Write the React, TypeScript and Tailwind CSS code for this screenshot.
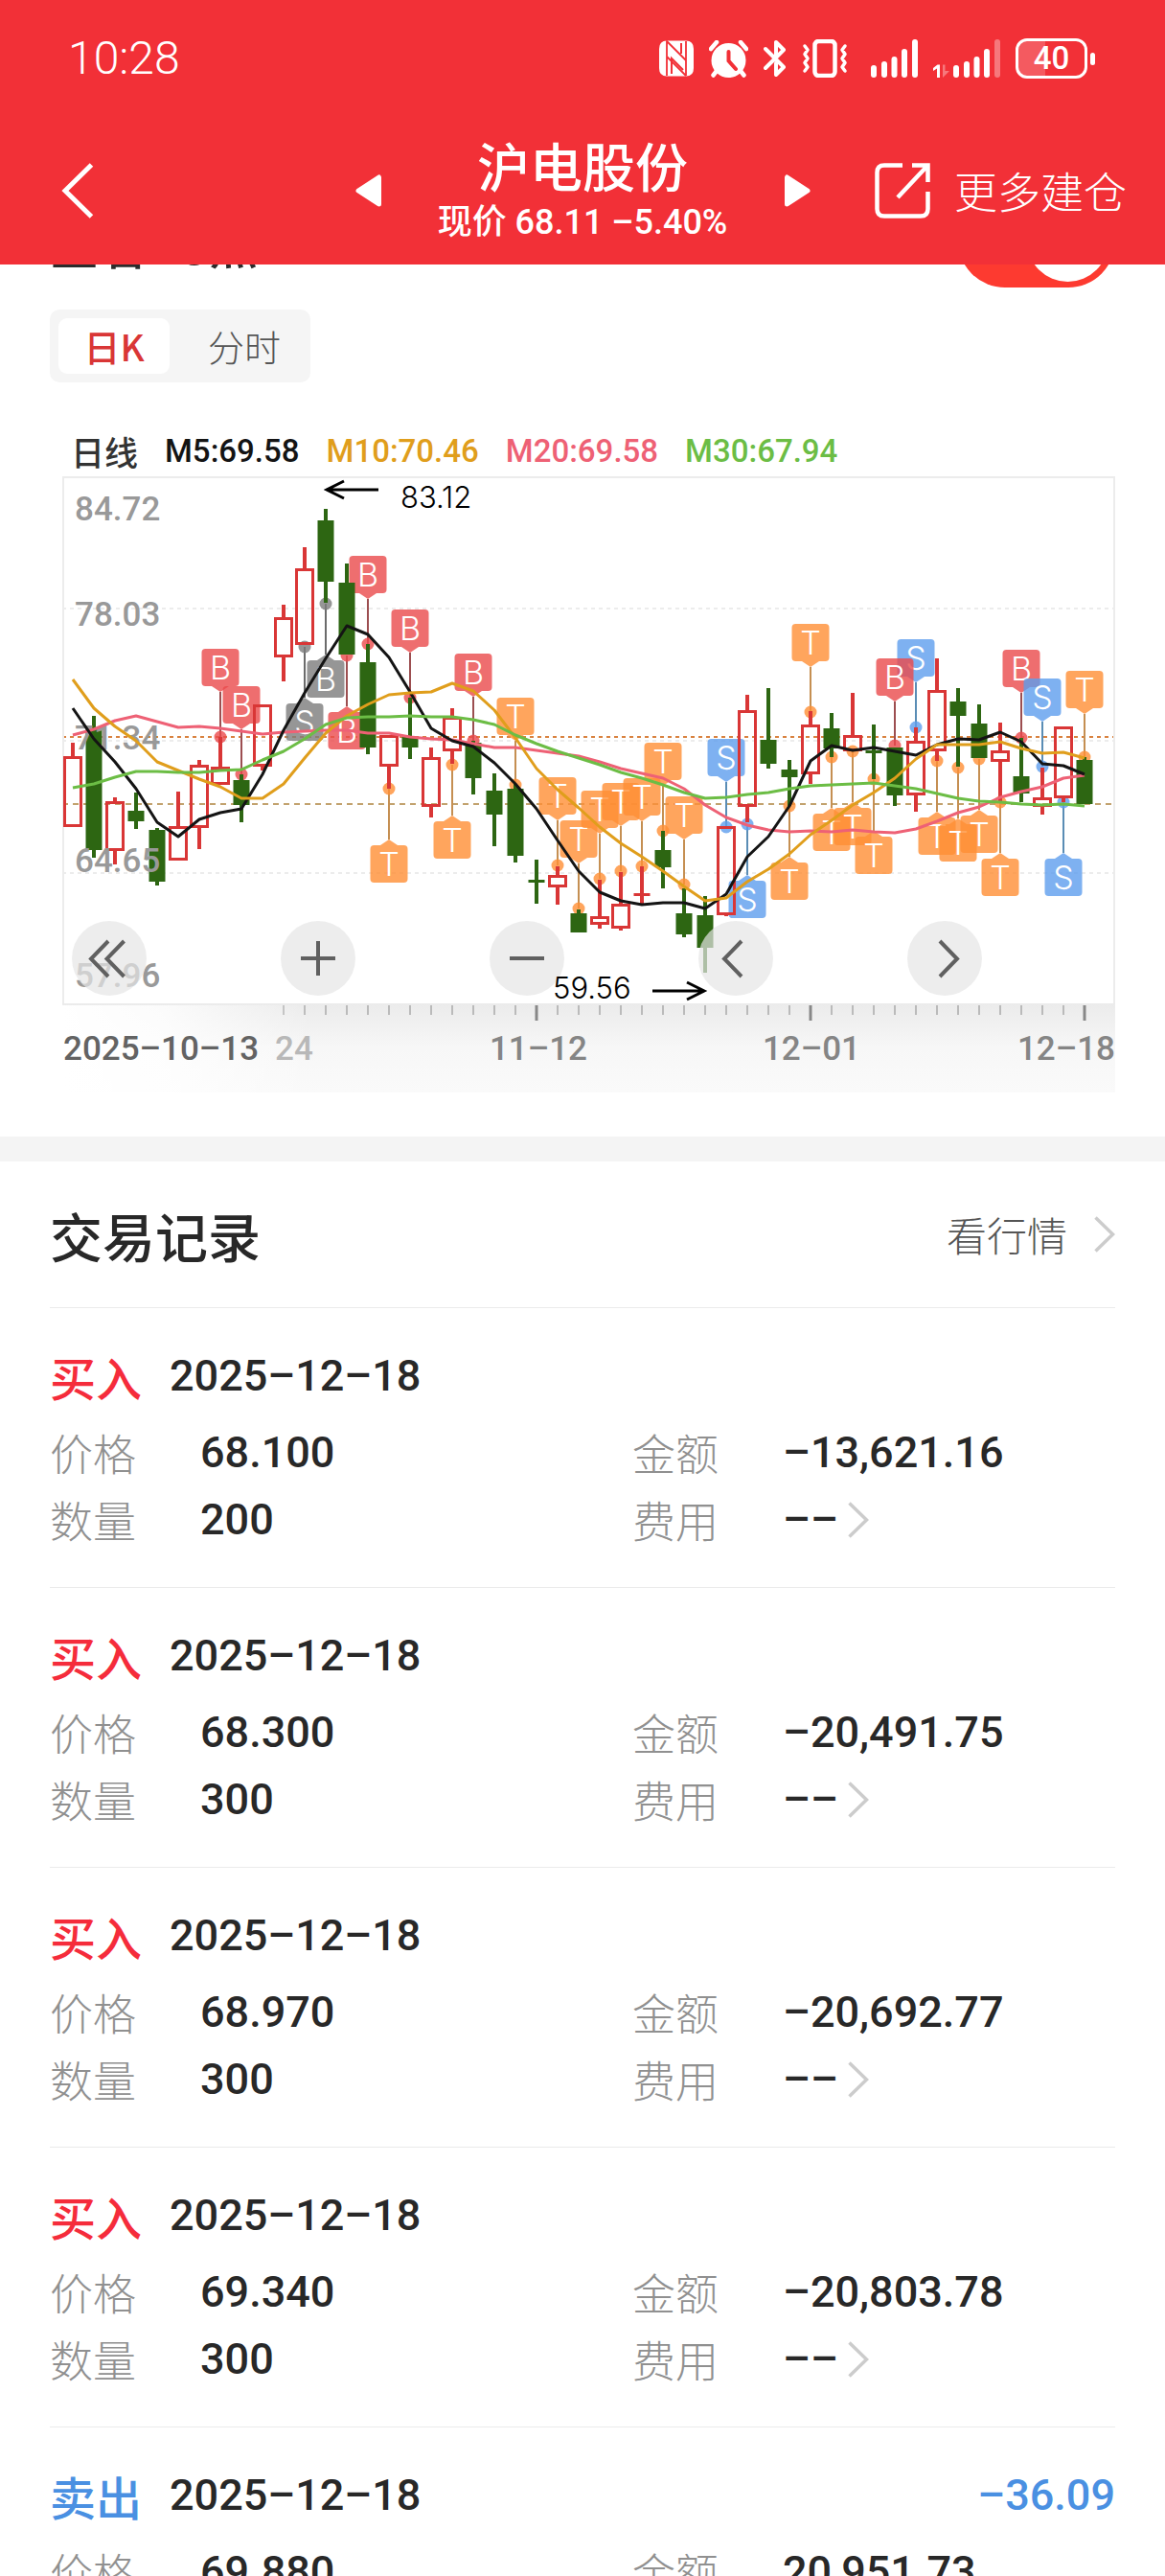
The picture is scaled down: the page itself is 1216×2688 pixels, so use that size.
import React, { useState } from 'react';

type Candle = [high: number, top: number, bottom: number, low: number, up: boolean];
type Tag = [index: number, letter: string, top: number, dot: number, closed?: boolean];

const STEP = 22;
const FIRST_X = 76;
const BOX = 39;

const xAt = (i: number) => FIRST_X + i * STEP;

const candles: Candle[] = [
  [775, 789, 863, 863, true],
  [747, 761, 887, 895, false],
  [832, 836, 888, 902, true],
  [827, 846, 857, 865, false],
  [864, 866, 920, 924, false],
  [826, 862, 898, 898, true],
  [793, 798, 864, 886, true],
  [769, 800, 819, 819, true],
  [808, 814, 840, 858, false],
  [735, 735, 800, 804, true],
  [631, 644, 686, 711, true],
  [571, 593, 673, 673, true],
  [531, 543, 607, 629, false],
  [588, 608, 683, 683, false],
  [672, 691, 780, 787, false],
  [767, 767, 800, 823, true],
  [728, 769, 780, 792, false],
  [780, 790, 842, 853, true],
  [739, 748, 784, 797, true],
  [773, 775, 812, 829, false],
  [807, 825, 850, 883, false],
  [818, 823, 893, 900, false],
  [897, 918, 921, 943, false],
  [904, 913, 926, 944, true],
  [949, 953, 973, 973, false],
  [918, 956, 965, 969, true],
  [910, 943, 969, 971, true],
  [904, 932, 935, 943, true],
  [867, 887, 905, 927, false],
  [927, 953, 975, 978, false],
  [935, 955, 989, 1015, false],
  [862, 862, 955, 956, true],
  [725, 741, 842, 858, true],
  [718, 772, 797, 802, false],
  [793, 803, 811, 841, false],
  [742, 756, 808, 818, true],
  [744, 760, 781, 790, false],
  [723, 767, 784, 784, true],
  [756, 783, 786, 813, false],
  [780, 780, 830, 841, false],
  [759, 773, 830, 847, true],
  [687, 720, 784, 794, true],
  [718, 732, 747, 800, false],
  [735, 755, 791, 791, false],
  [754, 783, 795, 838, true],
  [770, 810, 828, 837, false],
  [801, 832, 842, 850, true],
  [758, 758, 833, 837, true],
  [790, 793, 839, 839, false],
];

const tags: Tag[] = [
  [7, 'B', 677, 769],
  [8, 'B', 716, 808],
  [11, 'S', 734, 675, true],
  [12, 'B', 689, 630, true],
  [13, 'B', 743, 684],
  [14, 'B', 580, 672],
  [15, 'T', 882, 823],
  [16, 'B', 636, 728],
  [18, 'T', 857, 798],
  [19, 'B', 682, 773],
  [21, 'T', 728, 819],
  [23, 'T', 811, 903],
  [24, 'T', 856, 948],
  [25, 'T', 825, 917],
  [26, 'T', 817, 909],
  [27, 'T', 812, 904],
  [28, 'T', 775, 867],
  [29, 'T', 831, 923],
  [31, 'S', 771, 863],
  [32, 'S', 919, 860],
  [34, 'T', 900, 841],
  [35, 'T', 651, 743],
  [36, 'T', 849, 790],
  [37, 'T', 843, 784],
  [38, 'T', 873, 813],
  [40, 'S', 667, 759],
  [39, 'B', 687, 778],
  [41, 'T', 853, 794],
  [42, 'T', 860, 801],
  [43, 'T', 851, 792],
  [44, 'T', 896, 837],
  [45, 'B', 678, 770],
  [46, 'S', 708, 800],
  [47, 'S', 896, 837],
  [48, 'T', 700, 790],
];

const averages = [
  {
    name: 'M20',
    color: '#ee6175',
    ys: [767, 761, 752, 747, 753, 759, 758, 760, 763, 766, 764, 763, 762, 762, 765, 765, 769, 771, 772, 776, 780, 780, 783, 786, 789, 795, 802, 807, 812, 823, 840, 853, 861, 866, 868, 867, 868, 866, 868, 869, 865, 857, 848, 842, 832, 826, 821, 812, 809],
  },
  {
    name: 'M5',
    color: '#141414',
    ys: [739, 771, 795, 823, 858, 873, 855, 848, 844, 808, 762, 723, 687, 653, 662, 686, 722, 760, 773, 779, 796, 818, 844, 877, 909, 931, 940, 944, 942, 942, 948, 933, 894, 873, 841, 794, 778, 783, 780, 784, 788, 777, 771, 772, 764, 774, 797, 799, 808],
  },
  {
    name: 'M10',
    color: '#e09e1c',
    ys: [709, 739, 758, 773, 795, 804, 813, 821, 833, 833, 818, 791, 765, 747, 735, 725, 723, 722, 713, 721, 741, 770, 802, 824, 843, 863, 880, 894, 909, 925, 940, 937, 920, 907, 891, 871, 856, 840, 827, 812, 792, 777, 777, 777, 774, 781, 786, 785, 791],
  },
  {
    name: 'M30',
    color: '#6cbd45',
    ys: [822, 818, 811, 805, 805, 806, 806, 804, 803, 793, 784, 771, 756, 749, 748, 748, 747, 748, 748, 751, 756, 767, 776, 784, 791, 798, 806, 812, 819, 827, 833, 832, 829, 827, 823, 820, 819, 818, 817, 820, 823, 828, 833, 836, 837, 839, 840, 839, 841],
  },
];

const priceLabels = [
  { text: '84.72', y: 543 },
  { text: '78.03', y: 653 },
  { text: '71.34', y: 782 },
  { text: '64.65', y: 910 },
  { text: '57.96', y: 1030 },
];

const records = [
  { side: '买入', date: '2025–12–18', price: '68.100', count: '200', amount: '–13,621.16' },
  { side: '买入', date: '2025–12–18', price: '68.300', count: '300', amount: '–20,491.75' },
  { side: '买入', date: '2025–12–18', price: '68.970', count: '300', amount: '–20,692.77' },
  { side: '买入', date: '2025–12–18', price: '69.340', count: '300', amount: '–20,803.78' },
  { side: '卖出', date: '2025–12–18', price: '69.880', count: '300', amount: '20,951.73', profit: '–36.09' },
];

const tagColor = (letter: string, closed?: boolean) => {
  if (closed) return '#7c7c7c';
  if (letter === 'B') return '#eb4a4c';
  if (letter === 'S') return '#5e9eee';
  return '#ff8f35';
};

const stemColor = (letter: string, closed?: boolean) => {
  if (closed) return '#6b6b6b';
  if (letter === 'B') return '#9c4e50';
  if (letter === 'S') return '#5a8db5';
  return '#c58f52';
};

const Chevron = ({ className }: { className?: string }) => (
  <svg viewBox="0 0 22 38" className={`h-[38px] w-[22px] ${className ?? ''}`} fill="none" stroke="#cccccc" strokeWidth="3.5">
    <path d="M1.5 1.5 L19.5 19 L1.5 36.5" />
  </svg>
);

const SignalBars = ({ weak = false }: { weak?: boolean }) => (
  <svg viewBox="0 0 49 40" className="h-10 w-[49px]" fill="white">
    <rect x="0" y="27" width="6" height="13" rx="3" />
    <rect x="11" y="23" width="6" height="17" rx="3" />
    <rect x="21.5" y="18" width="6" height="22" rx="3" />
    <rect x="32" y="10" width="6" height="30" rx="3" />
    <rect x="43" y="0" width="6" height="40" rx="3" opacity={weak ? 0.35 : 1} />
  </svg>
);

const StatusBar = () => (
  <div className="flex h-[122px] items-center justify-between pl-[71px] pr-[73px]">
    <span className="text-[48px] leading-[60px] font-light">10:28</span>
    <div className="flex items-center">
      <svg viewBox="0 0 36 38" className="h-[38px] w-9">
        <path d="M8 0.5 H28 Q36 0.5 36 9 V29 Q36 37.5 28 37.5 H8 Q0 37.5 0 29 V9 Q0 0.5 8 0.5 Z" fill="white" />
        <path d="M8 37 V1 L28 21 M28 37 V1 M28 37 L8 17" fill="none" stroke="#f23037" strokeWidth="1.8" strokeLinejoin="round" />
        <path d="M13 35 V19 L25 31 M23 3 V14" fill="none" stroke="#f23037" strokeWidth="2" />
      </svg>
      <svg viewBox="0 0 41 39" className="ml-4 h-[39px] w-[41px]">
        <circle cx="20.5" cy="21" r="18" fill="white" />
        <path d="M2 9 L8 2 M39 9 L33 2 M8 32 L4.5 36.5 M33 32 L36.5 36.5" stroke="white" strokeWidth="4.5" strokeLinecap="round" />
        <path d="M20.5 12 V21.5 L28 30" fill="none" stroke="#f23037" strokeWidth="4" strokeLinecap="round" />
      </svg>
      <svg viewBox="0 0 24 40" className="ml-4 h-10 w-6" fill="none" stroke="white" strokeWidth="4" strokeLinejoin="round" strokeLinecap="round">
        <path d="M2 10 L21 29 L13 37 V25 M2 30 L21 11 L13 3 V16" />
      </svg>
      <svg viewBox="0 0 48 40" className="ml-4 h-10 w-12" fill="none" stroke="white">
        <rect x="13.5" y="2" width="21" height="36" rx="4" strokeWidth="4.5" />
        <path d="M3 7 L6 11 L3 15.5 L6 20 L3 24.5 L6 29 L3 33 M45 7 L42 11 L45 15.5 L42 20 L45 24.5 L42 29 L45 33" strokeWidth="3.5" strokeLinejoin="round" strokeLinecap="round" />
      </svg>
      <div className="ml-6">
        <SignalBars />
      </div>
      <svg viewBox="0 0 17 14" className="mt-[25px] ml-4 h-[14px] w-[17px]" fill="white">
        <path d="M4 14 V4.5 L0 7 V4 L4.5 0.5 H7 V14 Z" />
        <path d="M10 0.5 V14 L17 7 H12.5 V0.5 Z" opacity="0.35" />
      </svg>
      <div className="ml-1">
        <SignalBars weak />
      </div>
      <div className="ml-4 flex h-[42px] w-[75px] items-center justify-center rounded-[12px] border-[3px] border-white bg-[linear-gradient(90deg,#f45a60_40%,transparent_40%)]">
        <span className="text-[33px] leading-9 font-medium">40</span>
      </div>
      <span className="ml-[3px] h-[13px] w-[5px] rounded-full bg-white" />
    </div>
  </div>
);

const TopNav = () => (
  <nav className="grid h-[154px] grid-cols-[1fr_auto_1fr] items-center">
    <button aria-label="返回" className="ml-[64px] w-[34px]">
      <svg viewBox="0 0 34 60" className="h-[60px] w-[34px]" fill="none" stroke="white" strokeWidth="5">
        <path d="M31.5 3 L4 30 L31.5 57" />
      </svg>
    </button>
    <div className="flex items-center gap-[58px]">
      <button aria-label="上一只">
        <svg viewBox="0 0 27 34" className="h-[34px] w-[27px]" fill="white" stroke="white" strokeWidth="5" strokeLinejoin="round">
          <path d="M24.5 3 V31 L3 17 Z" />
        </svg>
      </button>
      <div className="w-[305px] text-center font-medium whitespace-nowrap">
        <h1 className="font-['Noto_Sans_CJK_SC',sans-serif] text-[55px] leading-[66px]">沪电股份</h1>
        <p className="text-[36px] leading-[56px]">现价 68.11 –5.40%</p>
      </div>
      <button aria-label="下一只">
        <svg viewBox="0 0 27 34" className="h-[34px] w-[27px]" fill="white" stroke="white" strokeWidth="5" strokeLinejoin="round">
          <path d="M2.5 3 V31 L24 17 Z" />
        </svg>
      </button>
    </div>
    <a href="#more" className="mr-10 flex items-center justify-end gap-6 whitespace-nowrap">
      <svg viewBox="0 0 60 60" className="h-[60px] w-[60px]" fill="none" stroke="white" strokeWidth="4.5">
        <path d="M30 3.5 H11 Q3.5 3.5 3.5 11 V49 Q3.5 56.5 11 56.5 H49 Q56.5 56.5 56.5 49 V31" />
        <path d="M25 37 L56 4 M40 3.5 H56.5 V21" />
      </svg>
      <span className="font-['Noto_Sans_CJK_SC',sans-serif] text-[45px] leading-[60px] font-light">更多建仓</span>
    </a>
  </nav>
);

const KLineChart = () => (
  <svg viewBox="52 495 1112 645" className="block w-full">
    <defs>
      <linearGradient id="axisShade" x1="0" y1="0" x2="0" y2="1">
        <stop offset="0" stopColor="#ebebeb" />
        <stop offset="0.5" stopColor="#f7f7f7" />
        <stop offset="1" stopColor="#fafafa" />
      </linearGradient>
      <linearGradient id="axisFade" x1="0" y1="0" x2="1" y2="0">
        <stop offset="0" stopColor="#ffffff" />
        <stop offset="0.4" stopColor="#ffffff" stopOpacity="0.8" />
        <stop offset="1" stopColor="#ffffff" stopOpacity="0" />
      </linearGradient>
    </defs>

    {[635, 773, 911].map((y) => (
      <line key={y} x1="65" x2="1164" y1={y} y2={y} stroke="#ececec" strokeWidth="2" strokeDasharray="4 4" />
    ))}
    <line x1="65" x2="1164" y1="769" y2="769" stroke="#d9823f" strokeWidth="2" strokeDasharray="4 4" />
    <line x1="65" x2="1164" y1="839" y2="839" stroke="#c2a26e" strokeWidth="2" strokeDasharray="6 5" />
    <rect x="66" y="498" width="1097" height="550" fill="none" stroke="#ececec" strokeWidth="2" />

    {tags.map(([i, letter, top, dot, closed]) => {
      const x = xAt(i);
      const below = top > dot;
      const color = tagColor(letter, closed);
      const edge = below ? top : top + BOX;
      const tip = below ? top - 6 : top + BOX + 6;
      return (
        <g key={i}>
          <line x1={x} x2={x} y1={tip} y2={dot} stroke={stemColor(letter, closed)} strokeWidth="2" />
          <g fill={color} opacity="0.8">
            <rect x={x - 19.5} y={top} width={BOX} height={BOX} rx="4" />
            <path d={`M${x - 9} ${edge} L${x} ${tip} L${x + 9} ${edge} Z`} />
            <circle cx={x} cy={dot} r="6.5" />
          </g>
          <text x={x} y={top + 32} textAnchor="middle" fill="white" className="font-['Inter',sans-serif] text-[34px] font-light">
            {letter}
          </text>
        </g>
      );
    })}

    {candles.map(([high, top, bottom, low, up], i) => {
      const x = xAt(i);
      const color = up ? '#d93636' : '#2d6612';
      return (
        <g key={i} stroke={color}>
          <path d={`M${x} ${high} V${top} M${x} ${bottom} V${low}`} strokeWidth="4" />
          {up && bottom - top > 4 ? (
            <rect x={x - 8.5} y={top + 1.5} width="17" height={bottom - top - 3} fill="none" strokeWidth="3" />
          ) : (
            <rect x={x - 8.5} y={top} width="17" height={bottom - top} fill={color} stroke="none" />
          )}
        </g>
      );
    })}

    {priceLabels.map((label) => (
      <text key={label.text} x="78" y={label.y} fill="#999999" className="text-[35px] font-medium">
        {label.text}
      </text>
    ))}

    {averages.map((line) => (
      <polyline
        key={line.name}
        points={line.ys.map((y, i) => `${xAt(i)},${y}`).join(' ')}
        fill="none"
        stroke={line.color}
        strokeWidth="3"
        strokeLinejoin="round"
      />
    ))}

    <rect x="65" y="1047" width="1099" height="93" fill="url(#axisShade)" />
    {candles.map((_, i) => {
      if (i < 10) return null;
      const major = i === 22 || i === 35 || i === 48;
      return (
        <line key={i} x1={xAt(i)} x2={xAt(i)} y1="1049" y2={major ? 1065 : 1059} stroke="#888888" strokeWidth={major ? 3 : 1} />
      );
    })}
    <rect x="65" y="1049" width="260" height="91" fill="url(#axisFade)" />
    <g className="text-[35px] font-medium" fill="#858585">
      <text x="66" y="1106" fill="#636363">2025–10–13</text>
      <text x="287" y="1106" fill="#b8b8b8">24</text>
      <text x="562" y="1106" textAnchor="middle">11–12</text>
      <text x="847" y="1106" textAnchor="middle">12–01</text>
      <text x="1164" y="1106" textAnchor="end">12–18</text>
    </g>
  </svg>
);

const ExtremeMarks = () => (
  <svg viewBox="52 495 1112 645" className="pointer-events-none absolute inset-0 w-full" fill="none" stroke="black" strokeWidth="3">
    <path d="M395 511 H341 M359 502 L341 511 L359 520" />
    <path d="M681 1034 H735 M717 1025 L735 1034 L717 1043" />
    <g fill="black" stroke="none" className="font-['Inter',sans-serif] text-[31px] font-light">
      <text x="418" y="530">83.12</text>
      <text x="577" y="1042">59.56</text>
    </g>
  </svg>
);

const chartButtons = [
  { label: '最早', d: 'M38 21 L20 39.5 L38 58 M54.5 21 L36.5 39.5 L54.5 58' },
  { label: '放大', d: 'M21 39 H57 M39 21 V57' },
  { label: '缩小', d: 'M21 39 H57' },
  { label: '向左', d: 'M45 21 L27 39.5 L45 58' },
  { label: '向右', d: 'M34 21 L52 39.5 L34 58' },
];

const ChartSection = () => {
  const [tab, setTab] = useState('日K');
  const [showPoints, setShowPoints] = useState(true);

  return (
    <section className="px-[52px] pb-[46px]">
      <div className="flex h-6 items-end justify-between overflow-hidden">
        <label htmlFor="points" className="mb-4 font-['Noto_Sans_CJK_SC',sans-serif] text-[51px] leading-[60px] font-medium text-[#2b2b2b]">
          查看BS点
        </label>
        <input
          id="points"
          type="checkbox"
          role="switch"
          checked={showPoints}
          onChange={(e) => setShowPoints(e.target.checked)}
          className="flex h-[98px] w-[164px] shrink-0 appearance-none items-center justify-end rounded-full bg-[#fd3a30] px-[7px] before:block before:size-[85px] before:rounded-full before:bg-white"
        />
      </div>

      <div className="mt-[23px] flex">
        <div className="flex h-[76px] items-center gap-[18px] rounded-[10px] bg-[#f5f5f5] px-[9px] font-['Noto_Sans_CJK_SC',sans-serif] text-[38px]">
          <button onClick={() => setTab('日K')} className="h-[58px] w-[116px] rounded-[9px] bg-white leading-[58px] font-medium text-[#d93636]">
            日K
          </button>
          <button onClick={() => setTab('分时')} aria-pressed={tab === '分时'} className="h-[58px] w-[120px] leading-[58px] font-light text-[#555555]">
            分时
          </button>
        </div>
      </div>

      <div className="mt-12 flex gap-7 pl-[22px] text-[33px] leading-[48px] font-medium">
        <span className="font-['Noto_Sans_CJK_SC',sans-serif] text-[35px] text-[#333333]">日线</span>
        <span className="text-[#141414]">M5:69.58</span>
        <span className="text-[#e09e1c]">M10:70.46</span>
        <span className="text-[#ee6175]">M20:69.58</span>
        <span className="text-[#6cbd45]">M30:67.94</span>
      </div>

      <div className="relative">
        <KLineChart />
        <div className="absolute right-[139px] bottom-[101px] left-[23px] flex justify-between">
          {chartButtons.map((button) => (
            <button key={button.label} aria-label={button.label} className="size-[78px] rounded-full bg-[#e5e5e5]/70">
              <svg viewBox="0 0 78 78" className="size-full" fill="none" stroke="#606060" strokeWidth="4">
                <path d={button.d} />
              </svg>
            </button>
          ))}
        </div>
        <ExtremeMarks />
      </div>
    </section>
  );
};

const labelClass = "w-[157px] font-['Noto_Sans_CJK_SC',sans-serif] text-[45px] font-light text-[#909090]";

const RecordItem = ({ record }: { record: (typeof records)[number] }) => (
  <li className="relative pt-[41px] pb-9 after:absolute after:inset-x-[52px] after:bottom-0 after:h-px after:bg-[#ebebeb]">
    <div className="flex h-[60px] items-center px-[52px] text-[45px] leading-[60px] font-medium">
      <span className={`w-[125px] font-['Noto_Sans_CJK_SC',sans-serif] text-[48px] ${record.side === '买入' ? 'text-[#f52c3b]' : 'text-[#4a90e2]'}`}>
        {record.side}
      </span>
      <time>{record.date}</time>
      {record.profit && <span className="ml-auto text-[#4a90e2]">{record.profit}</span>}
    </div>
    <dl className="mt-[15px] grid grid-cols-2 text-[45px] leading-[70px] font-medium">
      <div className="flex h-[70px] items-center pl-[52px]">
        <dt className={labelClass}>价格</dt>
        <dd>{record.price}</dd>
      </div>
      <div className="flex h-[70px] items-center pl-[52px]">
        <dt className={labelClass}>金额</dt>
        <dd>{record.amount}</dd>
      </div>
      <div className="flex h-[70px] items-center pl-[52px]">
        <dt className={labelClass}>数量</dt>
        <dd>{record.count}</dd>
      </div>
      <div className="flex h-[70px] items-center pl-[52px]">
        <dt className={labelClass}>费用</dt>
        <dd>
          <button className="flex items-center gap-2.5">
            ––
            <Chevron />
          </button>
        </dd>
      </div>
    </dl>
  </li>
);

const App = () => {
  return (
    <div className="h-screen overflow-hidden bg-white font-['Roboto','Noto_Sans_CJK_SC',sans-serif] text-[#282828]">
      <header className="bg-[#f23037] text-white">
        <StatusBar />
        <TopNav />
      </header>

      <main>
        <ChartSection />
        <div className="h-[26px] bg-[#f4f4f4]" />
        <section>
          <div className="mx-[52px] flex h-[153px] items-center justify-between border-b border-[#ebebeb] font-['Noto_Sans_CJK_SC',sans-serif]">
            <h2 className="text-[55px] leading-[70px] font-medium">交易记录</h2>
            <a href="#quote" className="flex items-center gap-7 text-[42px] leading-[60px] font-light text-[#555555]">
              看行情
              <Chevron />
            </a>
          </div>
          <ul>
            {records.map((record) => (
              <RecordItem key={record.price} record={record} />
            ))}
          </ul>
        </section>
      </main>
    </div>
  );
};

export default App;
